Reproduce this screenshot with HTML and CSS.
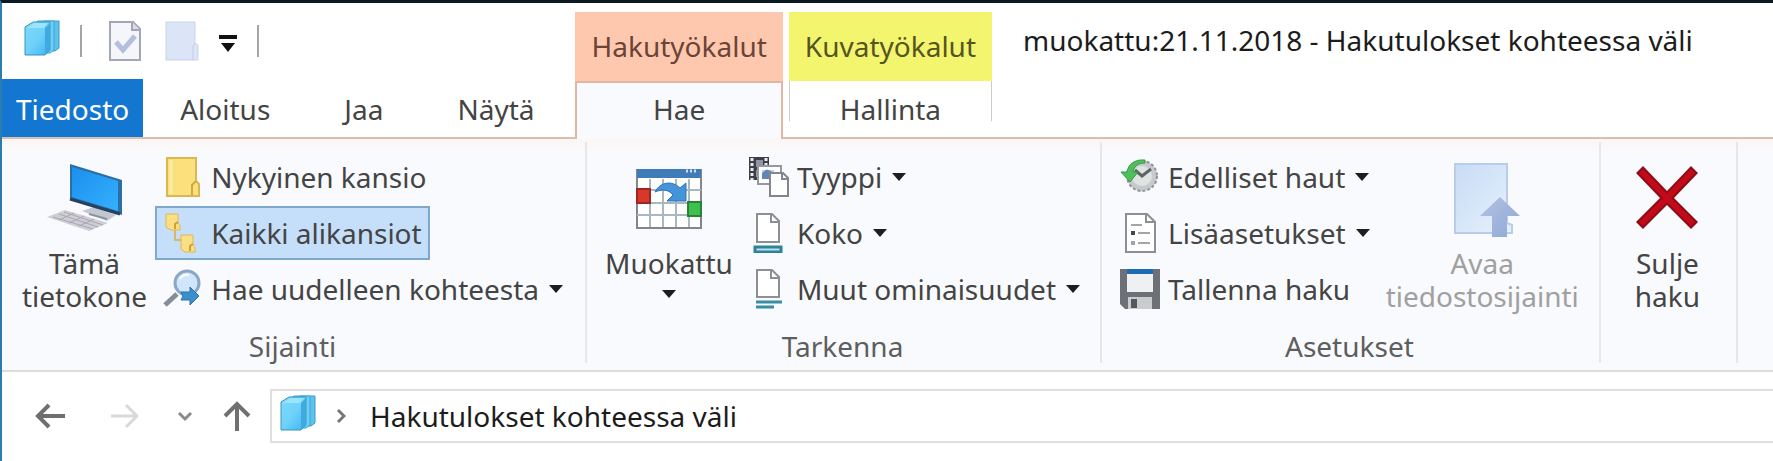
FILE: index.html
```html
<!DOCTYPE html>
<html lang="fi">
<head>
  <meta charset="UTF-8" />
  <meta name="viewport" content="width=device-width, initial-scale=1" />
  <title>Hakutulokset kohteessa väli</title>
  <link rel="stylesheet" href="styles.css">
</head>
<body>
  <!-- shared icons -->
  <svg class="sprite" aria-hidden="true">
    <defs>
      <linearGradient id="book-fill" x1="0" y1="0" x2="1" y2="1">
        <stop offset="0" stop-color="#7fd8fb" />
        <stop offset="0.5" stop-color="#6fd2fa" />
        <stop offset="1" stop-color="#3db4ee" />
      </linearGradient>
      <linearGradient id="screen-fill" x1="0" y1="0" x2="1" y2="1">
        <stop offset="0" stop-color="#1b8fee" />
        <stop offset="1" stop-color="#35b0fd" />
      </linearGradient>
      <linearGradient id="page-fill" x1="0" y1="0" x2="1" y2="1">
        <stop offset="0" stop-color="#c8dcf5" />
        <stop offset="1" stop-color="#e6f1fd" />
      </linearGradient>
      <linearGradient id="arrow-fill" x1="0" y1="0" x2="1" y2="1">
        <stop offset="0" stop-color="#b3c1e2" />
        <stop offset="1" stop-color="#8ea9d6" />
      </linearGradient>
    </defs>
    <symbol id="book" viewBox="0 0 36 36">
      <path d="M16 4 20 1H35V28L31 31H16Z" fill="#5cc3ee" stroke="#3b9cc8" />
      <path d="M9 5 14 1H30V30L26 33H9Z" fill="#6fd0f7" stroke="#3ba3d4" />
      <path d="M1 7 9 2H26V30L21 35H1Z" fill="url(#book-fill)" stroke="#3b93bd" />
      <path d="M21 35V8L26 3V30Z" fill="#3fa9e0" />
      <path d="M3 8 10 3H24L20 8Z" fill="#9be4fd" />
    </symbol>
    <symbol id="caret" viewBox="0 0 14 8">
      <path d="M0 0H14L7 8Z" fill="#1d1d1d" />
    </symbol>
  </svg>

  <div class="window">
    <header class="header">
      <div class="header-left">
        <div class="quick-access">
          <svg class="book-icon" viewBox="0 0 36 36"><use href="#book" /></svg>
          <span class="divider"></span>
          <button class="quick-button" aria-label="Ominaisuudet">
            <svg width="32" height="40" viewBox="0 0 32 40">
              <path d="M1 1H24L31 8V39H1Z" fill="#f4f6fb" stroke="#a3a6b4" stroke-width="2" />
              <path d="M23 1V9H31" fill="#d5dff0" stroke="#a3a6b4" stroke-width="2" />
              <path d="M7 21 14 29 26 15" fill="none" stroke="#b3bfdc" stroke-width="5" />
            </svg>
          </button>
          <button class="quick-button" aria-label="Uusi kansio">
            <svg width="34" height="40" viewBox="0 0 34 40">
              <path d="M1 1H30V22L33 24V39H1Z" fill="#dce4f7" stroke="#cad3e6" />
              <path d="M28 39V25L30 22" fill="none" stroke="#c3cce2" />
            </svg>
          </button>
          <button class="quick-button customize" aria-label="Mukauta pikatyökaluriviä">
            <svg width="18" height="17" viewBox="0 0 18 17">
              <path d="M0 0H18V4H0ZM2 8H16L9 17Z" fill="#111" />
            </svg>
          </button>
          <span class="divider"></span>
        </div>
        <nav class="tabs">
          <a class="tab tab-file" href="#tiedosto">Tiedosto</a>
          <a class="tab" href="#aloitus">Aloitus</a>
          <a class="tab" href="#jaa">Jaa</a>
          <a class="tab" href="#nayta">Näytä</a>
        </nav>
      </div>

      <div class="context context-search">
        <div class="context-title">Hakutyökalut</div>
        <a class="context-tab" href="#hae">Hae</a>
      </div>
      <div class="context context-picture">
        <div class="context-title">Kuvatyökalut</div>
        <a class="context-tab" href="#hallinta">Hallinta</a>
      </div>

      <h1 class="window-title">muokattu:21.11.2018 - Hakutulokset kohteessa väli</h1>
    </header>

    <div class="ribbon">
      <section class="group group-location">
        <div class="group-body">
          <button class="big-button">
            <svg class="big-icon" width="76" height="68" viewBox="0 3 76 68">
              <path d="M35 48 47 44 69 52 60 58Z" fill="#c3c7cf" />
              <path d="M42 51 60 56" stroke="#8d939d" stroke-width="2" />
              <path d="M23 1 75 17V52L23 36Z" fill="#2a6fa6" />
              <path d="M25 4 71 18V48L25 34Z" fill="url(#screen-fill)" />
              <path d="M23 36 73 51" stroke="#24435e" stroke-width="3" />
              <path d="M0 54 18 47 61 60 42 68Z" fill="#cfced6" />
              <path d="M6 54 46 66M12 51 51 64M17 49 56 62M12 57 27 50M22 60 37 53M32 63 47 56" stroke="#a9a7b3" />
            </svg>
            <span>Tämä<br>tietokone</span>
          </button>
          <div class="button-list">
            <button class="small-button">
              <svg width="40" height="40" viewBox="0 0 40 40">
                <path d="M4 1H33V24L36 27V39H4Z" fill="#fbe07c" stroke="#d9b850" stroke-width="2" />
                <path d="M8 3V37" stroke="#fdeca6" stroke-width="3" />
                <path d="M29 38V28L33 24" fill="none" stroke="#cfa93f" stroke-width="2" />
              </svg>
              Nykyinen kansio
            </button>
            <button class="small-button selected">
              <svg width="40" height="40" viewBox="0 0 40 40">
                <path d="M12 17V27H18" fill="none" stroke="#d8b866" stroke-width="2" />
                <path d="M3 1H15V10L17 12V17H8L3 14Z" fill="#fadf85" stroke="#dfb850" />
                <path d="M18 22H30V32L32 34V39H22L18 36Z" fill="#fadf85" stroke="#dfb850" />
                <path d="M12 16V11L15 9M27 38V33L30 31" fill="none" stroke="#cf9f35" stroke-width="2" />
              </svg>
              Kaikki alikansiot
            </button>
            <button class="small-button">
              <svg width="40" height="40" viewBox="0 0 40 40">
                <path d="M2 36 14 25" stroke="#858d99" stroke-width="5" />
                <circle cx="24" cy="14" r="12" fill="#cfe6fb" stroke="#8aa7c6" stroke-width="3" />
                <path d="M17 10Q20 5 26 6" fill="none" stroke="#fff" stroke-width="2" />
                <path d="M18 23H27V18L36 27 27 36V31H18L20 27Z" fill="#3b8fcc" stroke="#2b73aa" />
              </svg>
              Hae uudelleen kohteesta
              <svg class="caret" viewBox="0 0 14 8"><use href="#caret" /></svg>
            </button>
          </div>
        </div>
        <h2 class="group-label">Sijainti</h2>
      </section>

      <section class="group group-refine">
        <div class="group-body">
          <button class="big-button">
            <svg class="big-icon" width="66" height="68" viewBox="0 1 66 68">
              <path d="M1 5H65V63H1Z" fill="#fff" stroke="#83858f" stroke-width="2" />
              <path d="M14 14V62M27 14V62M40 14V62M53 14V62M1 25H65M1 38H65M1 50H65" stroke="#a9b8c0" stroke-width="2" />
              <path d="M1 4H65V13H1Z" fill="#3f7cb8" />
              <path d="M50 6H62" stroke="#c9dff3" stroke-width="3" stroke-dasharray="2 2" />
              <path d="M1 24H14V38H1Z" fill="#d8382b" stroke="#9c2820" stroke-width="2" />
              <path d="M52 37H65V51H52Z" fill="#3fbf4c" stroke="#27823a" stroke-width="2" />
              <path d="M19 27C24 17 36 15 44 23L50 18V36H31L37 30C32 24 26 24 19 27Z" fill="#4494dc" stroke="#2f73b3" />
            </svg>
            <span>Muokattu</span>
            <svg class="caret caret-below" viewBox="0 0 14 8"><use href="#caret" /></svg>
          </button>
          <div class="button-list">
            <button class="small-button">
              <svg width="40" height="40" viewBox="0 0 40 40">
                <path d="M0 0H20V23H0Z" fill="#3c3f48" />
                <path d="M3 1V23M17 1V8" stroke="#e9ebef" stroke-width="3" stroke-dasharray="3 2" />
                <path d="M7 3H14V10H7ZM7 13H14V20H7Z" fill="#90959f" />
                <path d="M9 9H32V27H9Z" fill="#fff" stroke="#9298a4" stroke-width="2" />
                <path d="M13 13H25V22H13Z" fill="#6285b5" />
                <path d="M13 16 18 12 25 16V13H13Z" fill="#b9d3f0" />
                <path d="M21 16H34L39 21V39H21Z" fill="#fff" stroke="#85868c" stroke-width="2" />
                <path d="M33 16V22H39" fill="none" stroke="#85868c" stroke-width="2" />
              </svg>
              Tyyppi
              <svg class="caret" viewBox="0 0 14 8"><use href="#caret" /></svg>
            </button>
            <button class="small-button">
              <svg width="40" height="40" viewBox="0 0 40 40">
                <path d="M8 1H23L30 8V29H8Z" fill="#fff" stroke="#8d8f95" stroke-width="2" />
                <path d="M22 1V9H30" fill="none" stroke="#8d8f95" stroke-width="2" />
                <path d="M6 34H32V39H6Z" fill="#b8e2ec" stroke="#2d8398" stroke-width="3" />
              </svg>
              Koko
              <svg class="caret" viewBox="0 0 14 8"><use href="#caret" /></svg>
            </button>
            <button class="small-button">
              <svg width="40" height="40" viewBox="0 0 40 40">
                <path d="M8 1H23L30 8V28H8Z" fill="#fff" stroke="#8d8f95" stroke-width="2" />
                <path d="M22 1V9H30" fill="none" stroke="#8d8f95" stroke-width="2" />
                <path d="M7 33H33M7 38H25" stroke="#3a8ea2" stroke-width="3" />
              </svg>
              Muut ominaisuudet
              <svg class="caret" viewBox="0 0 14 8"><use href="#caret" /></svg>
            </button>
          </div>
        </div>
        <h2 class="group-label">Tarkenna</h2>
      </section>

      <section class="group group-options">
        <div class="group-body">
          <div class="button-list">
            <button class="small-button">
              <svg width="40" height="40" viewBox="0 0 40 40">
                <circle cx="22" cy="19" r="15" fill="#c6cacc" stroke="#8f9598" stroke-width="2" stroke-dasharray="3 2" />
                <circle cx="22" cy="19" r="10" fill="#dfe4e2" />
                <path d="M15 13 22 19 31 12" fill="none" stroke="#5c6468" stroke-width="3" />
                <path d="M25 3C14 2 8 8 7 15H1L10 25 18 15H13C14 9 18 6 25 6Z" fill="#4fbf5b" stroke="#36994a" />
              </svg>
              Edelliset haut
              <svg class="caret" viewBox="0 0 14 8"><use href="#caret" /></svg>
            </button>
            <button class="small-button">
              <svg width="40" height="40" viewBox="0 0 40 40">
                <path d="M6 1H27L35 9V39H6Z" fill="#fff" stroke="#8d8f95" stroke-width="2" />
                <path d="M26 1V9H35" fill="none" stroke="#8d8f95" stroke-width="2" />
                <path d="M11 12H22M18 20H30M18 30H30" stroke="#a3a5aa" stroke-width="2" />
                <path d="M11 18H15V22H11Z" fill="#45474d" />
                <path d="M11 28H15V32H11Z" fill="#9fa2a8" />
              </svg>
              Lisäasetukset
              <svg class="caret" viewBox="0 0 14 8"><use href="#caret" /></svg>
            </button>
            <button class="small-button">
              <svg width="40" height="40" viewBox="0 0 40 40">
                <path d="M0 0H40V40H5L0 35Z" fill="#6e7077" />
                <path d="M7 0H33V23H7Z" fill="#eef0f2" />
                <path d="M7 0H33V5H7Z" fill="#1c6cb4" />
                <path d="M8 28H32V40H8Z" fill="#c9cbce" />
                <path d="M11 30H17V39H11Z" fill="#55575e" />
              </svg>
              Tallenna haku
            </button>
          </div>
          <button class="big-button" disabled>
            <svg class="big-icon" width="76" height="74" viewBox="-10 0 76 74">
              <path d="M1 1H53V60L58 62V70H1Z" fill="url(#page-fill)" stroke="#b9cde8" stroke-width="2" />
              <path d="M46 34 66 53H53V74H38V53H26Z" fill="url(#arrow-fill)" />
            </svg>
            <span>Avaa<br>tiedostosijainti</span>
          </button>
        </div>
        <h2 class="group-label">Asetukset</h2>
      </section>

      <section class="group group-close">
        <div class="group-body">
          <button class="big-button">
            <svg class="big-icon" width="62" height="68" viewBox="0 0 62 68">
              <path d="M7 0 31 25 55 0 62 7 38 32 62 56 55 63 31 39 7 63 0 56 24 32 0 7Z" fill="#8d0d14" />
              <path d="M7 3 31 28 55 3 59 7 35 32 59 56 55 60 31 36 7 60 3 56 27 32 3 7Z" fill="#c40a1a" />
            </svg>
            <span>Sulje<br>haku</span>
          </button>
        </div>
      </section>
    </div>

    <div class="address-row">
      <div class="nav-buttons">
        <button class="nav-button" aria-label="Takaisin">
          <svg width="30" height="26" viewBox="0 0 30 26">
            <path d="M30 13H3M14 2 3 13 14 24" fill="none" stroke="#6f6f6f" stroke-width="4" />
          </svg>
        </button>
        <button class="nav-button forward" aria-label="Eteenpäin" disabled>
          <svg width="28" height="26" viewBox="0 0 28 26">
            <path d="M0 13H26M15 2 26 13 15 24" fill="none" stroke="#d9d9d9" stroke-width="3" />
          </svg>
        </button>
        <button class="nav-button recent" aria-label="Viimeisimmät sijainnit">
          <svg width="16" height="11" viewBox="0 0 16 11">
            <path d="M2 2 8 8 14 2" fill="none" stroke="#8a8a8a" stroke-width="3" />
          </svg>
        </button>
        <button class="nav-button" aria-label="Ylös">
          <svg width="28" height="30" viewBox="0 0 28 30">
            <path d="M14 30V3M2 15 14 3 26 15" fill="none" stroke="#707070" stroke-width="4" />
          </svg>
        </button>
      </div>
      <div class="address-bar">
        <svg class="book-icon" viewBox="0 0 36 36"><use href="#book" /></svg>
        <svg class="crumb-arrow" width="10" height="16" viewBox="0 0 10 16">
          <path d="M2 2 8 8 2 14" fill="none" stroke="#777" stroke-width="3" />
        </svg>
        <a class="crumb" href="#vali">Hakutulokset kohteessa väli</a>
      </div>
    </div>
  </div>
</body>
</html>
```
FILE: styles.css
```css
* {
  box-sizing: border-box;
}

body {
  margin: 0;
  font-family: "Noto Sans", "Open Sans", sans-serif;
  font-size: 28px;
  line-height: 33px;
  color: #444;
  background: #fff;
}

h1, h2 {
  margin: 0;
  font-size: inherit;
  font-weight: normal;
}

a {
  color: inherit;
  text-decoration: none;
}

button {
  padding: 0;
  border: 0;
  background: none;
  font: inherit;
  color: inherit;
}

svg {
  display: block;
  flex: none;
}

.sprite {
  position: absolute;
  width: 0;
  height: 0;
}

.window {
  min-height: 100vh;
  border-top: 3px solid #0b1a22;
  border-left: 2px solid #2b7cb0;
}

/* title bar and tabs */
.header {
  display: flex;
  height: 136px;
  white-space: nowrap;
}

.header-left {
  display: flex;
  flex-direction: column;
  justify-content: space-between;
  padding-right: 4px;
  border-bottom: 2px solid #d9bfae;
}

.quick-access {
  display: flex;
  align-items: center;
  height: 76px;
  padding-left: 22px;
}

.book-icon {
  width: 36px;
  height: 36px;
  margin-bottom: 6px;
}

.divider {
  width: 2px;
  height: 32px;
  margin: 0 27px 0 20px;
  background: #a5a5a5;
}

.quick-button {
  margin-right: 24px;
}

.customize {
  margin: 4px 0 0 -4px;
}

.tabs {
  display: flex;
}

.tab {
  padding: 14px 37px 11px;
}

.tab-file {
  padding-left: 14px;
  padding-right: 14px;
  background: #1377d1;
  color: #fff;
}

.context {
  display: flex;
  flex-direction: column;
  padding-top: 9px;
  text-align: center;
}

.context-title {
  flex: 1;
  padding: 18px 16px 0;
}

.context-tab {
  height: 58px;
  padding-top: 12px;
}

.context-search .context-title {
  background: #fec8ae;
  color: #6b4438;
}

.context-search .context-tab {
  border: 2px solid #e0b8a2;
  border-bottom: 0;
  background: #f9fafd;
  padding-top: 10px;
}

.context-picture {
  padding-left: 6px;
  border-bottom: 2px solid #d9bfae;
}

.context-picture .context-title {
  background: #f3f56f;
  color: #55561f;
}

.context-picture .context-tab {
  height: 56px;
  border: 1px solid;
  border-width: 0 1px;
  border-image: linear-gradient(#ccc 70%, transparent 72%) 1;
}

.window-title {
  flex: 1;
  padding: 21px 0 0 31px;
  border-bottom: 2px solid #d9bfae;
  color: #1c1c1c;
}

/* ribbon */
.ribbon {
  display: flex;
  border-bottom: 2px solid #dcdcdd;
  background: linear-gradient(#fdf5f3, #f9fafd 12px);
  white-space: nowrap;
}

.group {
  display: flex;
  flex-direction: column;
  margin: 3px 0 7px;
  padding: 8px 12px 0 10px;
  border-right: 2px solid #e6e7ea;
}

.group-location {
  padding-left: 12px;
  padding-right: 14px;
}

.group-body {
  display: flex;
  flex: 1;
}

.group-label {
  margin-top: 14px;
  text-align: center;
  color: #5e5e5e;
}

.big-button {
  display: flex;
  flex-direction: column;
  align-items: center;
  padding: 13px 8px 0;
}

.group-close .big-button {
  padding: 13px 24px 0;
}

.big-icon {
  height: 74px;
  margin-bottom: 10px;
}

.big-button:disabled {
  color: #a0a0a0;
}

.caret {
  width: 14px;
  height: 8px;
}

.caret-below {
  margin-top: 10px;
}

.button-list {
  display: flex;
  flex-direction: column;
  align-items: flex-start;
  gap: 2px;
}

.small-button {
  display: flex;
  align-items: center;
  gap: 8px;
  height: 54px;
  padding: 0 8px;
}

.small-button .caret {
  margin-left: 2px;
}

.selected {
  padding: 0 6px;
  border: 2px solid #7fa9cc;
  background: #c5defa;
}

/* address bar */
.address-row {
  display: flex;
  align-items: center;
  padding-top: 17px;
}

.nav-buttons {
  display: flex;
  align-items: center;
  padding: 0 19px 0 33px;
}

.forward {
  margin-left: 46px;
}

.recent {
  margin: 0 30px 0 38px;
}

.address-bar {
  display: flex;
  flex: 1;
  align-items: center;
  height: 54px;
  padding-left: 8px;
  border: 2px solid #dedede;
  border-right: 0;
}

.crumb-arrow {
  margin: 0 24px 0 20px;
}

.crumb {
  color: #1c1c1c;
}
```
